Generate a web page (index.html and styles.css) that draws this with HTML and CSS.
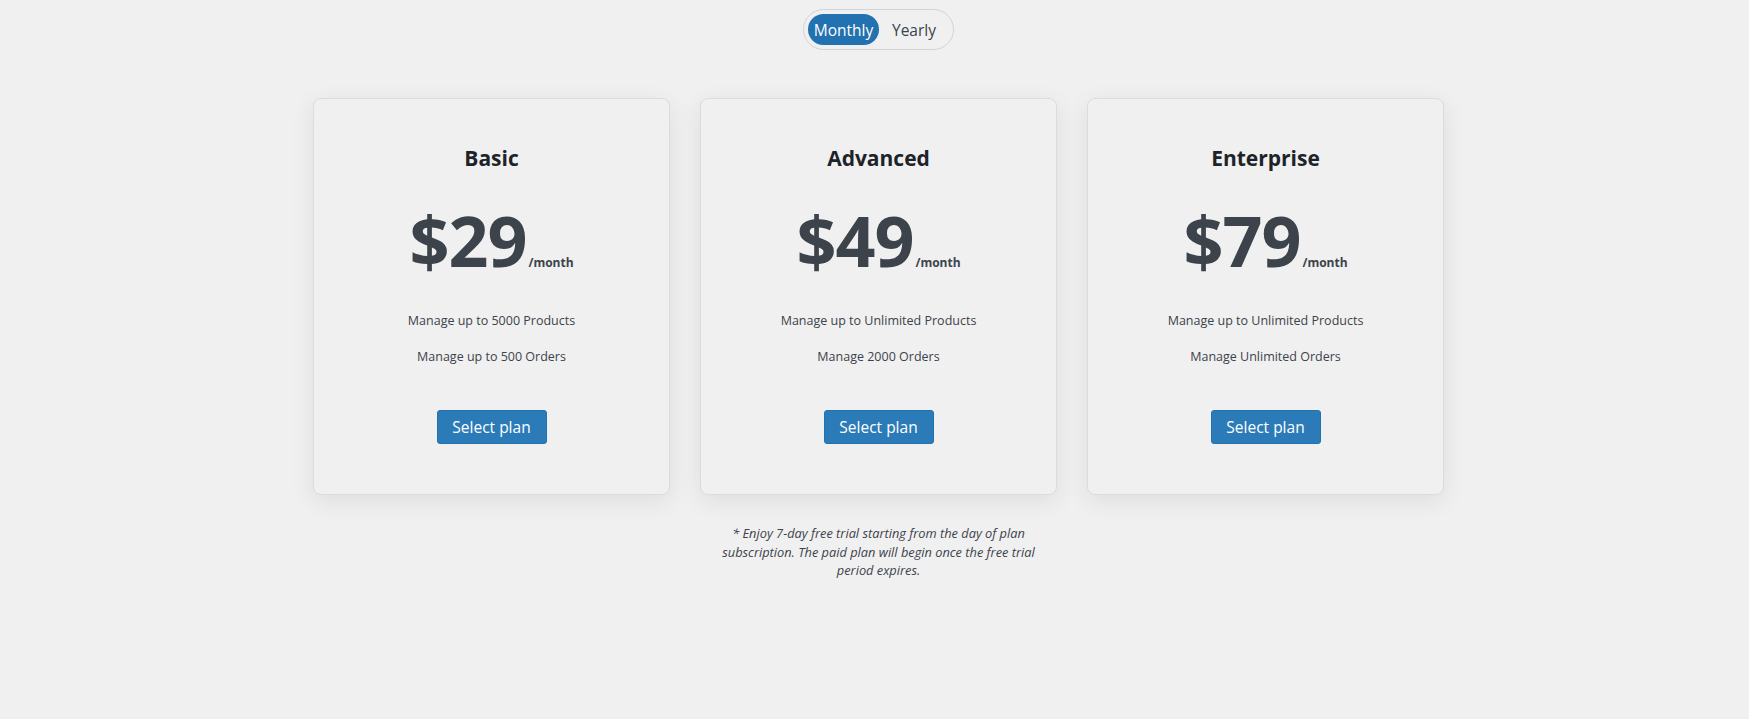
FILE: index.html
```html
<!DOCTYPE html>
<html lang="en">
<head>
<meta charset="utf-8">
<title>Plans</title>
<link rel="stylesheet" href="styles.css">
</head>
<body>
<div class="page">
  <div class="toggle">
    <span class="toggle-opt active">Monthly</span>
    <span class="toggle-opt">Yearly</span>
  </div>
  <div class="plans">
    <div class="card">
      <h2 class="card-title">Basic</h2>
      <hr class="card-rule">
      <div class="price"><span class="amount">$29</span><span class="per">/month</span></div>
      <p class="feature">Manage up to 5000 Products</p>
      <p class="feature">Manage up to 500 Orders</p>
      <button class="select-btn">Select plan</button>
    </div>
    <div class="card">
      <h2 class="card-title">Advanced</h2>
      <hr class="card-rule">
      <div class="price"><span class="amount">$49</span><span class="per">/month</span></div>
      <p class="feature">Manage up to Unlimited Products</p>
      <p class="feature">Manage 2000 Orders</p>
      <button class="select-btn">Select plan</button>
    </div>
    <div class="card">
      <h2 class="card-title">Enterprise</h2>
      <hr class="card-rule">
      <div class="price"><span class="amount">$79</span><span class="per">/month</span></div>
      <p class="feature">Manage up to Unlimited Products</p>
      <p class="feature">Manage Unlimited Orders</p>
      <button class="select-btn">Select plan</button>
    </div>
  </div>
  <p class="note">* Enjoy 7-day free trial starting from the day of plan subscription. The paid plan will begin once the free trial period expires.</p>
</div>
</body>
</html>
```
FILE: styles.css
```css
html, body {
  margin: 0;
  padding: 0;
  background: #f0f0f1;
}
body {
  font-family: "Open Sans", "Noto Sans", sans-serif;
  color: #3c434a;
  padding-left: 8px;
}
.page {
  display: flex;
  flex-direction: column;
  align-items: center;
  padding-top: 9px;
}
.toggle {
  display: flex;
  align-items: center;
  box-sizing: border-box;
  height: 41px;
  padding: 0 4px;
  border: 1px solid #d3d3d6;
  border-radius: 21px;
}
.toggle-opt {
  display: flex;
  align-items: center;
  justify-content: center;
  height: 31px;
  width: 70px;
  border-radius: 16px;
  font-size: 15.5px;
  color: #3c434a;
}
.toggle-opt.active {
  background: #2271b1;
  color: #fff;
  width: 71px;
}
.plans {
  display: flex;
  gap: 30px;
  margin-top: 48px;
}
.card {
  box-sizing: border-box;
  width: 357px;
  height: 397px;
  border: 1px solid #dcdcde;
  border-radius: 8px;
  background: #f0f0f1;
  box-shadow: 0 6px 24px rgba(0, 0, 0, 0.08);
  display: flex;
  flex-direction: column;
  align-items: center;
  padding-top: 45px;
}
.card-title {
  margin: 0;
  font-size: 21px;
  line-height: 28px;
  font-weight: 700;
  color: #1d2327;
}
.card-rule {
  width: 257px;
  margin: 15px 0 0;
  border: 0;
  border-top: 1px solid #eeeeef;
}
.price {
  display: flex;
  align-items: baseline;
  margin-top: 12px;
  color: #3c434a;
}
.amount {
  font-size: 70px;
  line-height: 80px;
  font-weight: 700;
  letter-spacing: -1px;
}
.per {
  font-size: 12px;
  font-weight: 700;
  margin-left: 2px;
}
.feature {
  margin: 0;
  font-size: 12.5px;
  line-height: 20px;
}
.price + .feature {
  margin-top: 31px;
}
.feature + .feature {
  margin-top: 16px;
}
.select-btn {
  margin-top: 43px;
  box-sizing: border-box;
  width: 110px;
  height: 34px;
  border: 1px solid #2271b1;
  border-radius: 3px;
  background: #2c7bb9;
  color: #fff;
  font-family: inherit;
  font-size: 15.5px;
  cursor: pointer;
}
.note {
  width: 326px;
  margin: 29px 0 0;
  text-align: center;
  font-size: 12.8px;
  line-height: 18.5px;
  font-style: italic;
  color: #3c434a;
}
```
